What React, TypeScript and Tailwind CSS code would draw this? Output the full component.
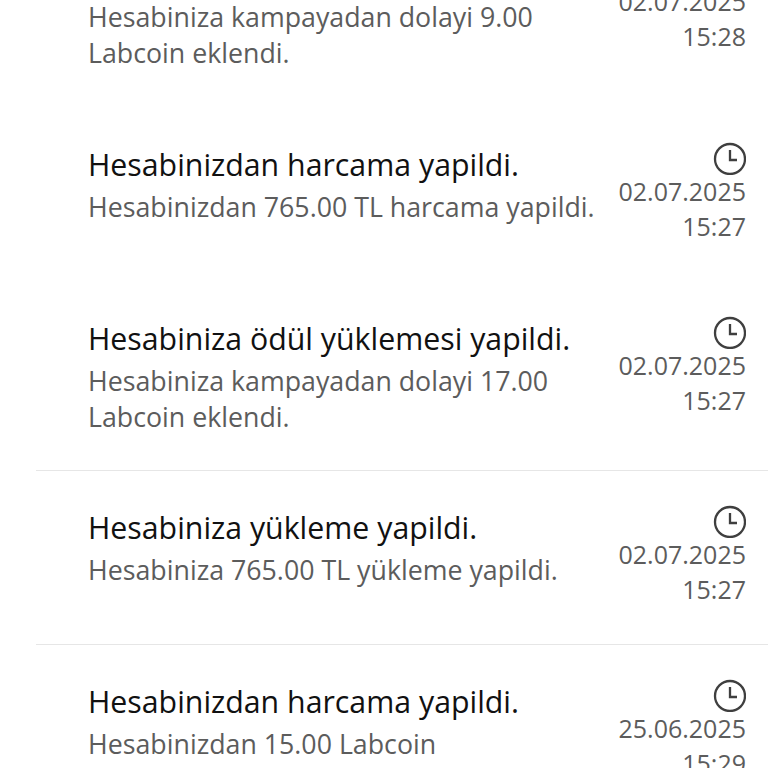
import React from 'react';

interface Notice {
  title: string;
  body: string;
  date: string;
  time: string;
  line?: boolean;
}

const notices: Notice[] = [
  { title: 'Hesabiniza ödül yüklemesi yapildi.', body: 'Hesabiniza kampayadan dolayi 9.00 Labcoin eklendi.', date: '02.07.2025', time: '15:28' },
  { title: 'Hesabinizdan harcama yapildi.', body: 'Hesabinizdan 765.00 TL harcama yapildi.', date: '02.07.2025', time: '15:27' },
  { title: 'Hesabiniza ödül yüklemesi yapildi.', body: 'Hesabiniza kampayadan dolayi 17.00 Labcoin eklendi.', date: '02.07.2025', time: '15:27', line: true },
  { title: 'Hesabiniza yükleme yapildi.', body: 'Hesabiniza 765.00 TL yükleme yapildi.', date: '02.07.2025', time: '15:27', line: true },
  { title: 'Hesabinizdan harcama yapildi.', body: 'Hesabinizdan 15.00 Labcoin', date: '25.06.2025', time: '15:29' },
];

function ClockIcon() {
  return (
    <svg width="33" height="33" viewBox="0 0 33 33" fill="none" stroke="#3f3f3f" strokeWidth="2.3">
      <circle cx="17" cy="17" r="15" />
      <path d="M17 8v10h7" />
    </svg>
  );
}

function Row({ n }: { n: Notice }) {
  return (
    <div className={n.line ? 'ml-[36px] min-h-[174px] border-b border-[#e6e6e6]' : 'ml-[36px] min-h-[174px] first:mb-[2px]'}>
      <div className="flex justify-between pb-[35px] pl-[52px] pr-[22px] pt-[34px]">
        <div className="w-[510px]">
          <div className="pt-[2px] text-[30.3px] leading-[42px] text-[#111111]">{n.title}</div>
          <div className="mt-[3px] text-[26.75px] leading-[36px] text-[#5c5c5c]">{n.body}</div>
        </div>
        <div className="flex flex-col items-end text-[25px] leading-[35px] text-[#5c5c5c]">
          <ClockIcon />
          <div className="-mt-px">{n.date}</div>
          <div>{n.time}</div>
        </div>
      </div>
    </div>
  );
}

export default function App() {
  return (
    <div className="h-[768px] w-[768px] overflow-hidden bg-white font-['Open_Sans',sans-serif]">
      <div className="-mt-[82px]">
        {notices.map((n, i) => (
          <Row key={i} n={n} />
        ))}
      </div>
    </div>
  );
}
